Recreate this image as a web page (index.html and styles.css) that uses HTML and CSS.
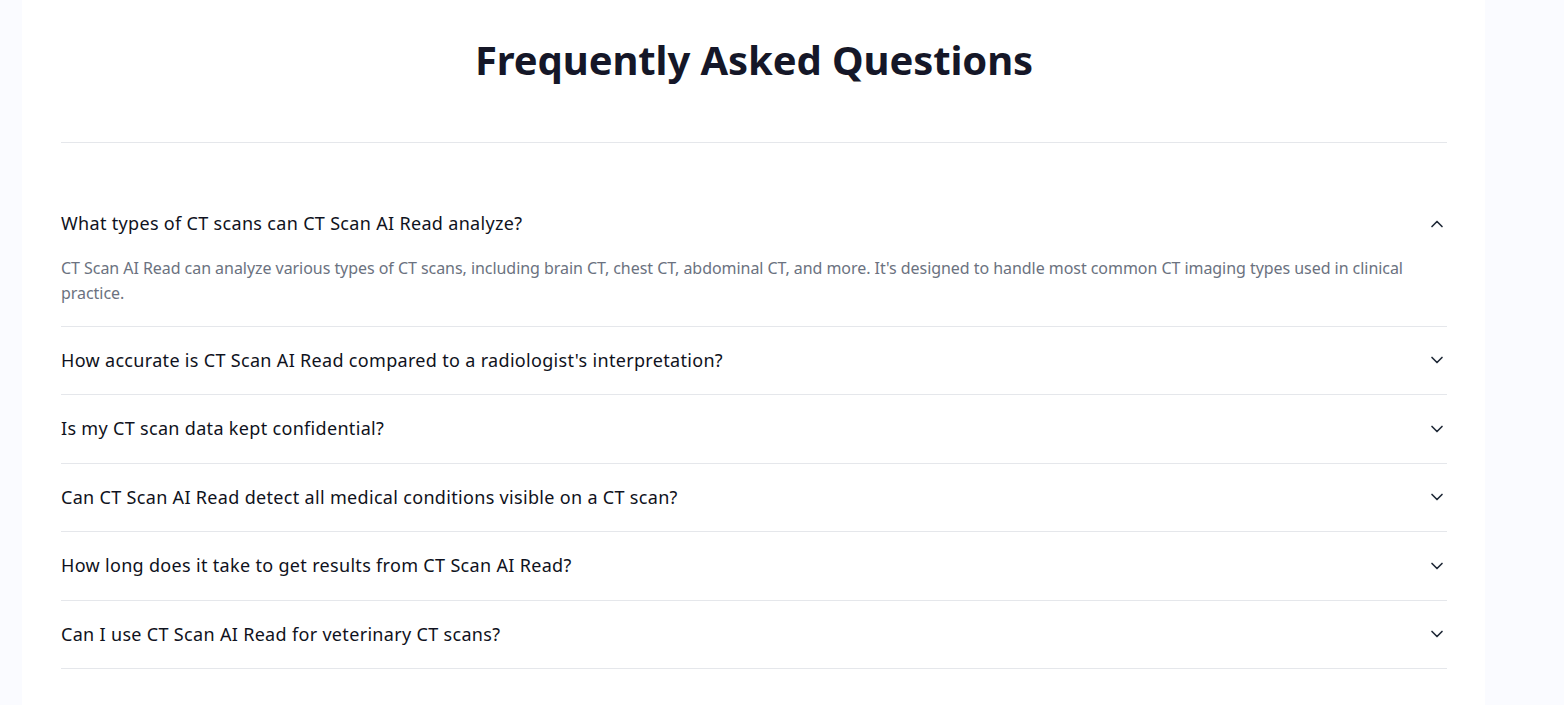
FILE: index.html
```html
<!DOCTYPE html>
<html lang="en">
<head>
<meta charset="utf-8">
<title>FAQ</title>
<link rel="stylesheet" href="styles.css">
</head>
<body>
<main class="page">
  <header class="faq-header">
    <h1 class="faq-title">Frequently Asked Questions</h1>
  </header>
  <section class="faq-list">
    <div class="faq-item open">
      <button class="faq-question">
        <span>What types of CT scans can CT Scan AI Read analyze?</span>
        <svg class="chev" viewBox="0 0 24 24" width="20" height="20"><path d="m18 15-6-6-6 6"/></svg>
      </button>
      <p class="faq-answer">CT Scan AI Read can analyze various types of CT scans, including brain CT, chest CT, abdominal CT, and more. It's designed to handle most common CT imaging types used in clinical practice.</p>
    </div>
    <div class="faq-item">
      <button class="faq-question">
        <span>How accurate is CT Scan AI Read compared to a radiologist's interpretation?</span>
        <svg class="chev" viewBox="0 0 24 24" width="20" height="20"><path d="m6 9 6 6 6-6"/></svg>
      </button>
    </div>
    <div class="faq-item">
      <button class="faq-question">
        <span>Is my CT scan data kept confidential?</span>
        <svg class="chev" viewBox="0 0 24 24" width="20" height="20"><path d="m6 9 6 6 6-6"/></svg>
      </button>
    </div>
    <div class="faq-item">
      <button class="faq-question">
        <span>Can CT Scan AI Read detect all medical conditions visible on a CT scan?</span>
        <svg class="chev" viewBox="0 0 24 24" width="20" height="20"><path d="m6 9 6 6 6-6"/></svg>
      </button>
    </div>
    <div class="faq-item">
      <button class="faq-question">
        <span>How long does it take to get results from CT Scan AI Read?</span>
        <svg class="chev" viewBox="0 0 24 24" width="20" height="20"><path d="m6 9 6 6 6-6"/></svg>
      </button>
    </div>
    <div class="faq-item">
      <button class="faq-question">
        <span>Can I use CT Scan AI Read for veterinary CT scans?</span>
        <svg class="chev" viewBox="0 0 24 24" width="20" height="20"><path d="m6 9 6 6 6-6"/></svg>
      </button>
    </div>
  </section>
</main>
</body>
</html>
```

FILE: styles.css
```css
* { box-sizing: border-box; }
html, body { height: 100%; }
body {
  margin: 0;
  background: #fafbff;
  font-family: "Noto Sans", "Open Sans", "Liberation Sans", sans-serif;
  color: #111827;
  overflow: hidden;
}
.page {
  margin-left: 22px;
  width: 1463px;
  min-height: 100%;
  background: #ffffff;
  padding: 0 38px 0 39px;
}
.faq-header {
  padding-top: 32px;
  padding-bottom: 54px;
  border-bottom: 1px solid #e5e7eb;
}
.faq-title {
  margin: 0;
  text-align: center;
  font-size: 40px;
  line-height: 56px;
  font-weight: 700;
  letter-spacing: -0.1px;
  color: #151728;
}
.faq-list {
  margin-top: 47px;
}
.faq-item {
  border-bottom: 1px solid #e5e7eb;
}
.faq-question {
  display: flex;
  width: 100%;
  align-items: center;
  justify-content: space-between;
  padding: 20px 0;
  border: 0;
  background: none;
  font: inherit;
  font-size: 18px;
  font-weight: 400;
  line-height: 27.5px;
  letter-spacing: 0.32px;
  color: #0f1220;
  text-align: left;
  cursor: pointer;
}
.faq-item.open .faq-question { padding-bottom: 18px; }
.chev {
  flex: none;
  fill: none;
  stroke: #1f2937;
  stroke-width: 2;
  stroke-linecap: round;
  stroke-linejoin: round;
}
.faq-answer {
  margin: 0;
  padding-bottom: 20px;
  font-size: 16px;
  line-height: 25px;
  letter-spacing: -0.05px;
  color: #6b7280;
}
```
